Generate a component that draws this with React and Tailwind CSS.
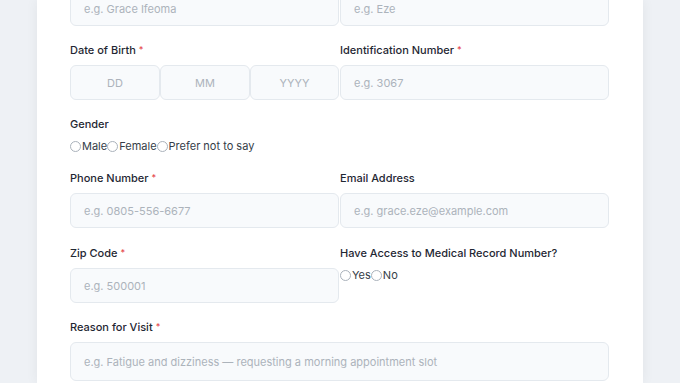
const font = { fontFamily: 'Inter, "Noto Sans", sans-serif' };

function Label({ children, required }) {
  return (
    <div className="h-[14px] mb-[8px] text-[11px] leading-[14px] font-medium text-[#1f2733] whitespace-nowrap">
      {children}
      {required && <span className="text-[#e5484d] ml-[3px] text-[9px] align-top">*</span>}
    </div>
  );
}

function Field({ placeholder, className = '' }) {
  return (
    <input
      readOnly
      placeholder={placeholder}
      className={`block w-full h-[35px] rounded-[6px] border border-[#e4e9ee] bg-[#f8fafc] px-[13px] text-[11px] text-[#1f2733] placeholder:text-[#acb3bb] outline-none ${className}`}
    />
  );
}

function Radio({ label }) {
  return (
    <label className="flex items-center">
      <span className="w-[11px] h-[11px] rounded-full border border-[#aab2bb] bg-white" />
      <span className="ml-[1px] text-[11px] leading-[14px] text-[#353d48]">{label}</span>
    </label>
  );
}

export default function App() {
  return (
    <div className="w-[680px] h-[383px] overflow-hidden bg-[#eef1f5]" style={font}>
      <div className="flow-root ml-[37px] w-[606px] h-full bg-white shadow-[0_0_12px_rgba(15,23,42,0.06)] pl-[33px] pr-[34px]">
        <div className="-mt-[9px] grid grid-cols-2 gap-x-[1px] gap-y-[17px] w-[539px]">
          <Field placeholder="e.g. Grace Ifeoma" />
          <Field placeholder="e.g. Eze" />

          <div>
            <Label required>Date of Birth</Label>
            <div className="flex">
              <Field placeholder="DD" className="text-center !w-[90px]" />
              <Field placeholder="MM" className="text-center !w-[90px]" />
              <Field placeholder="YYYY" className="text-center !w-[89px]" />
            </div>
          </div>
          <div>
            <Label required>Identification Number</Label>
            <Field placeholder="e.g. 3067" />
          </div>

          <div className="col-span-2">
            <Label>Gender</Label>
            <div className="flex items-center">
              <Radio label="Male" />
              <Radio label="Female" />
              <Radio label="Prefer not to say" />
            </div>
          </div>

          <div className="mt-[1px]">
            <Label required>Phone Number</Label>
            <Field placeholder="e.g. 0805-556-6677" />
          </div>
          <div className="mt-[1px]">
            <Label>Email Address</Label>
            <Field placeholder="e.g. grace.eze@example.com" />
          </div>

          <div className="mt-[1px]">
            <Label required>Zip Code</Label>
            <Field placeholder="e.g. 500001" />
          </div>
          <div className="mt-[1px]">
            <Label>Have Access to Medical Record Number?</Label>
            <div className="flex items-center">
              <Radio label="Yes" />
              <Radio label="No" />
            </div>
          </div>

          <div className="col-span-2">
            <Label required>Reason for Visit</Label>
            <Field placeholder="e.g. Fatigue and dizziness — requesting a morning appointment slot" className="!h-[39px]" />
          </div>
        </div>
      </div>
    </div>
  );
}
